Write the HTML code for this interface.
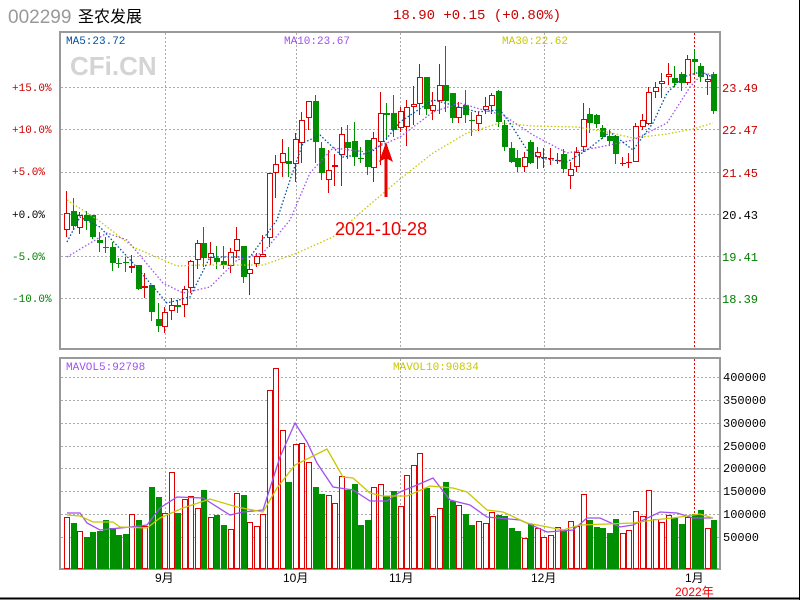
<!DOCTYPE html>
<html><head><meta charset="utf-8"><style>
html,body{margin:0;padding:0;background:#fff}
body{width:800px;height:600px;overflow:hidden;position:relative;font-family:"Liberation Mono","Noto Sans CJK SC",monospace}
svg{position:absolute;left:0;top:0}
</style></head><body>
<svg id="s" width="800" height="600" viewBox="0 0 800 600" xmlns="http://www.w3.org/2000/svg" shape-rendering="crispEdges">
<rect x="0" y="0" width="800" height="600" fill="#fff"/>
<line x1="799.5" y1="0" x2="799.5" y2="600" stroke="#000"/>
<line x1="0" y1="598.5" x2="800" y2="598.5" stroke="#000" stroke-width="2"/>
<text x="8" y="23" font-family="Liberation Sans,sans-serif" font-size="19" fill="#999">002299</text>
<text x="78" y="22" font-family="Liberation Sans,'Noto Sans CJK SC',sans-serif" font-size="16" fill="#000">圣农发展</text>
<text x="393" y="19" font-family="Liberation Mono,monospace" font-size="14" fill="#cc0000">18.90 +0.15 (+0.80%)</text>
<text x="70" y="75" font-family="Liberation Sans,sans-serif" font-weight="bold" font-size="26" fill="#d4d4d4">CFi.CN</text>
<g id="grid" stroke="#aaa" stroke-dasharray="2,2" stroke-width="1"></g>
<rect x="60" y="32" width="660" height="317" fill="none" stroke="#999" stroke-width="2"/>
<rect x="60" y="358" width="660" height="211" fill="none" stroke="#999" stroke-width="2"/>
<line x1="694.5" y1="33" x2="694.5" y2="348" stroke="#e00" stroke-dasharray="2,2"/>
<line x1="694.5" y1="359" x2="694.5" y2="568" stroke="#e00" stroke-dasharray="2,2"/>
<g font-family="Liberation Mono,monospace" font-size="11">
<text x="66" y="44" fill="#0050a0">MA5:23.72</text>
<text x="284" y="44" fill="#a050f0">MA10:23.67</text>
<text x="502" y="44" fill="#c8c800">MA30:22.62</text>
<text x="66" y="370" fill="#a050f0">MAVOL5:92798</text>
<text x="393" y="370" fill="#c8c800">MAVOL10:90834</text>
<text x="12" y="91" fill="#cc0000">+15.0%</text>
<text x="12" y="133" fill="#cc0000">+10.0%</text>
<text x="12" y="175" fill="#cc0000">+5.0%</text>
<text x="12" y="218" fill="#000">+0.0%</text>
<text x="12" y="260" fill="#008000">-5.0%</text>
<text x="12" y="302" fill="#008000">-10.0%</text>
<g font-size="12">
<text x="722" y="92" fill="#cc0000">23.49</text>
<text x="722" y="134" fill="#cc0000">22.47</text>
<text x="722" y="177" fill="#cc0000">21.45</text>
<text x="722" y="219" fill="#000">20.43</text>
<text x="722" y="261" fill="#008000">19.41</text>
<text x="722" y="303" fill="#008000">18.39</text>
<text x="723" y="381" fill="#000">400000</text>
<text x="723" y="404" fill="#000">350000</text>
<text x="723" y="427" fill="#000">300000</text>
<text x="723" y="450" fill="#000">250000</text>
<text x="723" y="472" fill="#000">200000</text>
<text x="723" y="495" fill="#000">150000</text>
<text x="723" y="518" fill="#000">100000</text>
<text x="723" y="541" fill="#000">50000</text>
</g></g>
<g font-family="Liberation Sans,'Noto Sans CJK SC',sans-serif" font-size="12" fill="#000">
<text x="155" y="582">9月</text><text x="283" y="582">10月</text><text x="389" y="582">11月</text><text x="531" y="582">12月</text><text x="685" y="582">1月</text>
<text x="675" y="596" fill="#e00">2022年</text>
</g>
<g id="c"></g>
<text x="335" y="235" font-family="Liberation Sans,sans-serif" font-size="18" fill="#e00">2021-10-28</text>
<line x1="386" y1="197" x2="386" y2="155" stroke="#e00" stroke-width="3"/>
<polygon points="386,142 379,162 386,158 393,162" fill="#e00"/>
</svg>
<script>
var NS="http://www.w3.org/2000/svg",s=document.getElementById('c'),g=document.getElementById('grid');
function el(p,t,a){var e=document.createElementNS(NS,t);for(var k in a)e.setAttribute(k,a[k]);p.appendChild(e);return e;}
[87,129,172,214,256,298].forEach(function(y){el(g,'line',{x1:61,x2:719,y1:y+.5,y2:y+.5});});
[377,400,423,446,468,491,514,537].forEach(function(y){el(g,'line',{x1:61,x2:719,y1:y+.5,y2:y+.5});});
[165,296,400,544].forEach(function(x){el(g,'line',{x1:x+.5,x2:x+.5,y1:33,y2:348});el(g,'line',{x1:x+.5,x2:x+.5,y1:359,y2:568});});
var A=[['r',400,450,333,470],['g',393,437,355,450],['r',406,445,397,463],['g',405,422,393,450],['g',405,470,405,478],['g',480,490,455,515],['g',500,505,470,520],['g',500,548,485,572],['g',548,553,535,565],['g',545,548,530,575],['r',558,564,525,580],['g',555,627,555,630],['r',618,625,580,655],['g',615,697,615,722],['g',717,737,670,755],['r',697,740,680,760],['r',676,694,655,720],['g',676,680,660,698],['r',628,676,618,712],['r',544,625,540,640],['r',490,540,480,568],['g',490,535,440,560],['r',520,535,485,555],['g',534,545,498,568],['g',543,555,498,568],['r',517,559,505,578],['r',478,513,441,535],['g',498,590,498,610],['r',568,583,540,645],['r',529,553,520,562],['r',522,532,466,530],['r',280,475,280,500],['r',253,280,225,355],['r',220,250,176,290],['g',243,253,200,290],['r',178,253,160,305],['r',120,190,95,248],['r',64,115,64,150],['g',63,185,45,250],['g',204,280,185,300],['r',271,301,210,338],['r',255,260,222,318],['r',162,225,140,318],['g',185,203,135,237],['g',183,230,125,258],['g',234,238,200,250],['g',180,262,180,285],['r',175,265,155,305],['r',100,187,37,255],['g',100,104,70,180],['g',100,150,45,170]];
var B=[['r',213,265,200,275],['r',200,262,180,318],['r',193,202,138,255],['r',112,193,72,225],['g',112,207,112,225],['r',195,213,155,240],['r',135,183,72,222],['g',135,183,18,215],['g',158,235,158,250],['r',202,235,185,250],['g',195,225,150,250],['g',241,244,215,287],['r',226,252,215,272],['r',198,210,172,222],['r',165,197,158,222],['g',153,245,150,260],['g',255,320,240,333],['g',325,365,305,368],['g',355,380,330,395],['r',350,380,335,395],['g',305,368,300,372],['r',337,352,320,388],['r',350,355,325,385],['r',355,358,325,375],['r',360,363,340,372],['g',343,388,328,400],['r',386,407,365,448],['r',337,380,320,395],['r',238,320,188,335],['g',223,250,205,278],['g',226,253,222,265],['g',265,292,255,298],['g',288,303,270,318],['g',288,343,285,372],['r',368,372,350,378],['r',365,368,340,385],['r',257,365,250,365],['r',240,262,222,270],['r',157,252,140,255],['r',142,155,125,175],['r',124,133,100,175],['r',102,112,70,135],['g',115,128,78,140],['g',103,128,95,152],['r',57,128,45,135],['g',57,65,30,100],['g',78,112,68,125],['r',118,127,105,165],['g',102,212,95,222]];
var RED="#dd0000",GRN="#008f00";
function cand(i,d,base){var x=Math.round(64+i*6.54),c=d[0]=='r'?RED:GRN;
var bt=Math.round(base+d[1]/3),bb=Math.round(base+d[2]/3),wt=Math.round(base+d[3]/3),wb=Math.round(base+d[4]/3);
el(s,'line',{x1:x+2.5,x2:x+2.5,y1:wt,y2:wb,stroke:c});
if(bb-bt<2){el(s,'rect',{x:x,y:bt,width:6,height:1,fill:c});return;}
if(d[0]=='r')el(s,'rect',{x:x+.5,y:bt+.5,width:5,height:bb-bt-1,fill:'#fff',stroke:c});
else el(s,'rect',{x:x,y:bt,width:6,height:bb-bt,fill:c});}
A.forEach(function(d,i){cand(i,d,80);});B.forEach(function(d,i){cand(i+51,d,40);});
var V='r501 g519 r544 g561 g546 g543 g510 g535 g555 g552 r493 g510 r528 g411 g441 r490 r367 g489 r447 r438 r475 g420 r502 g494 g525 r538 r430 g435 r517 r529 r493 r120 r55 r241 g396 r283 r280 r337 g411 g432 r436 r460 r379 g420 g402 g525 g510 r411 r403 g437 g423 r468 r376 r346 r310 g413 r497 r475 g396 g453 r465 g492 g525 r514 r520 r487 g495 g498 g534 g543 r564 g521 r535 r562 r556 r532 g540 r514 r529 r433 g510 g531 g534 g548 g507 r549 r541 r484 r498 r421 r508 r516 r495 g503 g521 r502 g493 g480 r535 g510'.split(' ');
V.forEach(function(v,i){var x=Math.round(64+i*6.54),t=Math.round(350+ +v.slice(1)/3),c=v[0]=='r';
if(c)el(s,'rect',{x:x+.5,y:t+.5,width:5,height:568-t,fill:'#fff',stroke:RED});else el(s,'rect',{x:x,y:t,width:6,height:569-t,fill:GRN});});
function pl(p,c,dash){el(s,'polyline',{points:p,fill:'none',stroke:c,'stroke-width':1.3,'stroke-dasharray':dash||'none','shape-rendering':'auto'});}
pl('67,200 98,220 133,247 177,266 200,265 263,265 297,253 333,237 367,207 400,179 433,153 467,133 500,123 533,126 577,127 607,132 633,138 667,134 693,129 713,123','#c8c800','1.5,2');
pl('67,257 107,233 127,240 163,283 183,293 210,287 237,260 263,253 290,220 310,173 333,148 367,152 400,137 433,112 460,103 483,110 503,115 533,135 567,153 600,147 633,140 667,123 690,87 703,73 713,75','#a050f0','1.5,2');
pl('67,242 80,217 100,227 133,263 167,303 190,297 210,257 250,257 277,220 290,180 303,143 320,135 343,157 370,153 383,143 400,122 433,100 460,107 477,112 500,110 510,123 527,150 540,158 567,162 587,150 610,132 633,150 653,123 667,93 683,77 700,72 713,77','#0050a0','1.5,2');
pl('67,513 80,513 87,523 100,530 130,527 147,525 160,508 177,497 203,498 230,515 243,512 263,510 280,457 295,423 307,442 317,463 333,487 353,490 370,501 387,501 400,492 417,485 433,478 450,500 470,505 487,517 520,520 547,532 573,530 587,518 600,518 620,527 633,525 660,512 677,513 693,518 713,518','#a050f0');
pl('67,515 80,516 93,522 113,522 120,527 147,528 160,518 183,508 210,499 237,507 263,512 277,488 295,465 327,449 343,477 353,478 370,493 383,496 407,496 430,486 453,488 467,492 487,510 503,512 527,523 563,530 580,525 607,524 633,523 653,520 673,518 700,514 713,518','#c8c800');
</script>
</body></html>
